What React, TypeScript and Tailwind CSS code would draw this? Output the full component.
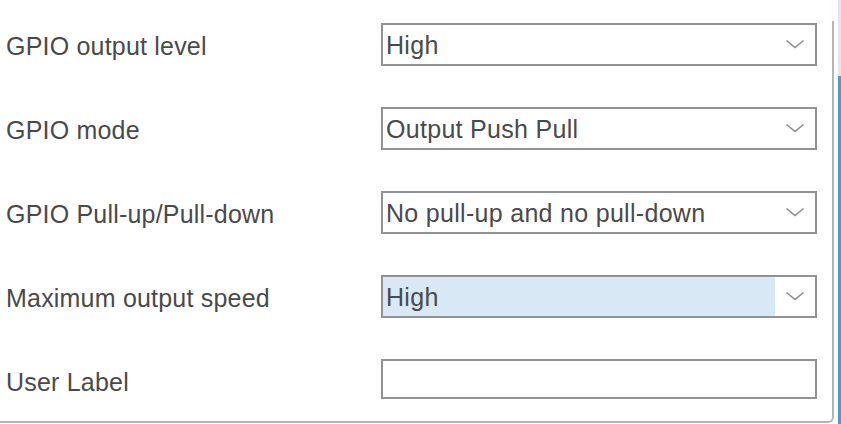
import React from "react";

const Chevron = () => (
  <svg width="20" height="10" viewBox="0 0 20 10" className="block">
    <polyline points="1.5,1.5 10,8.5 18.5,1.5" fill="none" stroke="#8c8c8c" strokeWidth="1.6" />
  </svg>
);

type RowProps = { label: string; value?: string; highlighted?: boolean; input?: boolean };

const Row = ({ label, value, highlighted, input }: RowProps) => (
  <div className="flex h-[84px] items-start">
    <div className="w-[381px] shrink-0 pl-[6px] text-[25px] leading-[46px] tracking-[0.2px] text-[#4a4a4a]">
      {label}
    </div>
    {input ? (
      <div className="h-[40px] w-[436px] shrink-0 border-2 border-[#8f9396] bg-white" />
    ) : (
      <div className="flex h-[43px] w-[436px] shrink-0 border-2 border-[#8f9396] bg-white">
        <div
          className={
            highlighted
              ? "flex-1 bg-[#d9e8f5] pl-[3px] text-[25px] leading-[41px] tracking-[0.3px] text-[#4a4a4a]"
              : "flex-1 pl-[3px] text-[25px] leading-[41px] tracking-[0.3px] text-[#4a4a4a]"
          }
        >
          {value}
        </div>
        <div className="flex w-[40px] items-center justify-center pb-[2px]">
          <Chevron />
        </div>
      </div>
    )}
  </div>
);

export default function App() {
  return (
    <div
      className="flex h-[424px] w-[841px] overflow-hidden bg-white"
      style={{ fontFamily: '"Liberation Sans", Arial, sans-serif' }}
    >
      <div className="mt-[21px] h-[402px] w-[834px] shrink-0 rounded-br-[6px] border-r-2 border-b-2 border-[#b3b5b7] pt-[2px]">
        <Row label="GPIO output level" value="High" />
        <Row label="GPIO mode" value="Output Push Pull" />
        <Row label="GPIO Pull-up/Pull-down" value="No pull-up and no pull-down" />
        <Row label="Maximum output speed" value="High" highlighted />
        <Row label="User Label" input />
      </div>
      <div className="w-[4px] shrink-0" />
      <div className="flex w-[3px] shrink-0 flex-col bg-[#dbe9f4]">
        <div className="h-[76px]" />
        <div className="flex-1 bg-[#35a3dc]" />
      </div>
    </div>
  );
}
